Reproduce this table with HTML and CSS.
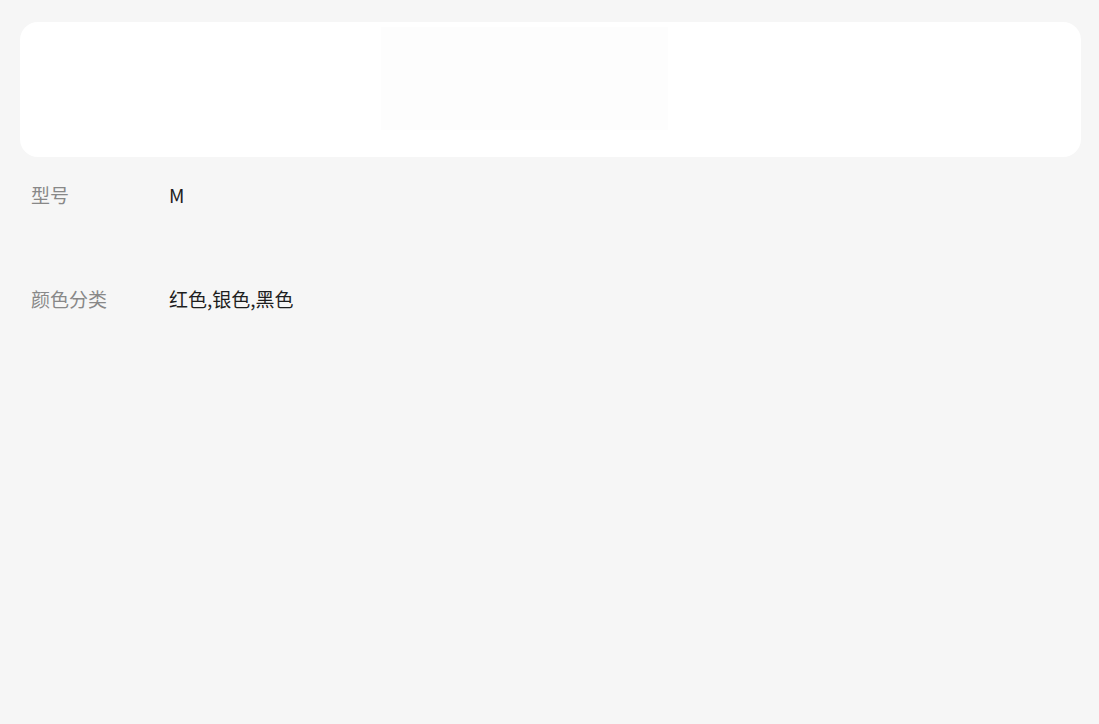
FILE: index.html
```html
<!DOCTYPE html>
<html lang="zh-CN">
<head>
<meta charset="utf-8">
<link rel="stylesheet" href="styles.css">
</head>
<body>
<div class="page">
  <div class="banner">
    <div class="banner-img"></div>
  </div>
  <div class="specs">
    <div class="row"><span class="label">型号</span><span class="value">M</span></div>
    <div class="row"><span class="label"></span><span class="value"></span></div>
    <div class="row"><span class="label">颜色分类</span><span class="value">红色,银色,黑色</span></div>
  </div>
</div>
</body>
</html>
```
FILE: styles.css
```css
html, body {
  margin: 0;
  padding: 0;
  background: #f6f6f6;
  font-family: "Noto Sans CJK SC", "Noto Sans", sans-serif;
}
.page {
  padding: 22px 18px 0 20px;
}
.banner {
  height: 135px;
  background: #ffffff;
  border-radius: 18px;
  display: flex;
  justify-content: flex-start;
  padding-left: 361px;
  padding-top: 5px;
  box-sizing: border-box;
}
.banner-img {
  width: 287px;
  height: 103px;
  background: #fdfdfd;
}
.specs {
  padding: 11px 0 0 11px;
}
.row {
  display: flex;
  align-items: center;
  height: 52px;
  font-size: 19px;
}
.label {
  width: 138px;
  color: #888888;
}
.value {
  color: #1e1e1e;
}
```
